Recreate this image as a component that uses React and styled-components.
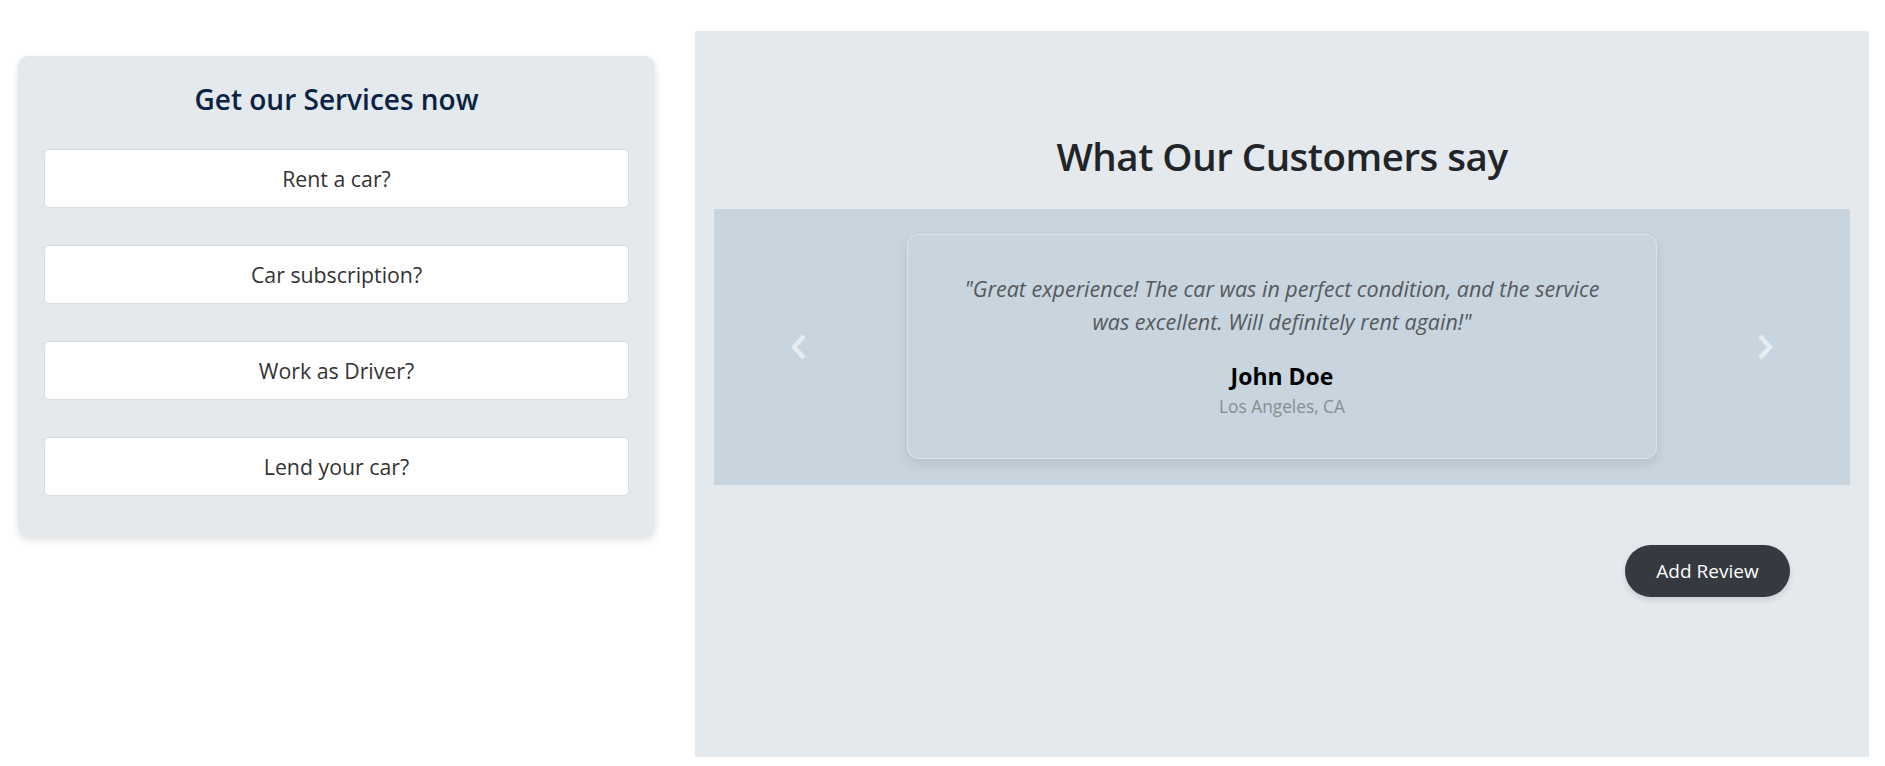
import React from 'react';
import styled, { createGlobalStyle } from 'styled-components';

const GlobalStyle = createGlobalStyle`
  body {
    margin: 0;
    background: #fff;
    font-family: "Open Sans", "Noto Sans", sans-serif;
  }
`;

const Page = styled.div`
  display: flex;
  align-items: flex-start;
  gap: 40px;
  padding: 31px 16px 9px 18px;
`;

const ServicesCard = styled.div`
  width: 637px;
  box-sizing: border-box;
  margin-top: 25px;
  padding: 27px 26px 40px;
  background: #e3e9ed;
  border-radius: 10px;
  box-shadow: 0 4px 8px rgba(0, 0, 0, 0.12);
`;

const ServicesTitle = styled.h2`
  margin: 0 0 32px;
  font-size: 28px;
  line-height: 33.6px;
  font-weight: 600;
  text-align: center;
  color: #0b2342;
`;

const ServiceList = styled.div`
  display: flex;
  flex-direction: column;
  gap: 37px;
`;

const ServiceButton = styled.button`
  height: 59px;
  width: 100%;
  background: #fff;
  border: 1px solid #d6dce0;
  border-radius: 5px;
  font-family: inherit;
  font-size: 21.3px;
  color: #333;
  cursor: pointer;
`;

const ReviewsPanel = styled.section`
  width: 1174px;
  height: 726px;
  box-sizing: border-box;
  padding: 0 19px;
  background: #e3e9ed;
  display: flex;
  flex-direction: column;
`;

const ReviewsHeading = styled.h1`
  margin: 101px 0 29px;
  font-size: 38.5px;
  letter-spacing: -0.5px;
  line-height: 48px;
  font-weight: 600;
  text-align: center;
  color: #212529;
`;

const Carousel = styled.div`
  display: flex;
  align-items: center;
  justify-content: space-between;
  padding: 25px 0 26px;
  background: #c9d5de;
`;

const Control = styled.button`
  width: 170px;
  align-self: stretch;
  display: flex;
  align-items: center;
  justify-content: center;
  background: none;
  border: 0;
  padding: 0;
  cursor: pointer;
`;

const ReviewCard = styled.div`
  width: 750px;
  height: 225px;
  box-sizing: border-box;
  padding: 37px 30px 0;
  border: 1px solid rgba(255, 255, 255, 0.35);
  border-radius: 12px;
  background: #c8d4de;
  box-shadow: 0 5px 12px rgba(0, 0, 0, 0.1);
  text-align: center;
`;

const Quote = styled.p`
  margin: 0 0 25px;
  font-size: 21.5px;
  line-height: 33px;
  font-style: italic;
  color: #55595d;
`;

const Name = styled.div`
  font-size: 23px;
  line-height: 26px;
  font-weight: 700;
  color: #000;
`;

const Location = styled.div`
  margin-top: 5px;
  font-size: 17.3px;
  line-height: 26px;
  color: #8a8d90;
`;

const AddButton = styled.button`
  align-self: flex-end;
  margin: 60px 60px 0 0;
  width: 165px;
  height: 52px;
  border: 0;
  border-radius: 26px;
  background: #343a40;
  color: #fff;
  font-family: inherit;
  font-size: 19px;
  box-shadow: 0 3px 6px rgba(0, 0, 0, 0.12);
  cursor: pointer;
`;

const Chevron = ({ dir }) => (
  <svg width="18" height="26" viewBox="0 0 18 26">
    <path
      d={dir === 'left' ? 'M14 2 L4 13 L14 24' : 'M4 2 L14 13 L4 24'}
      fill="none"
      stroke="#e6ecf0"
      strokeWidth="4.5"
      strokeLinejoin="miter"
    />
  </svg>
);

const services = ['Rent a car?', 'Car subscription?', 'Work as Driver?', 'Lend your car?'];

function App() {
  return (
    <>
      <GlobalStyle />
      <Page>
        <ServicesCard>
          <ServicesTitle>Get our Services now</ServicesTitle>
          <ServiceList>
            {services.map(s => (
              <ServiceButton key={s}>{s}</ServiceButton>
            ))}
          </ServiceList>
        </ServicesCard>

        <ReviewsPanel>
          <ReviewsHeading>What Our Customers say</ReviewsHeading>
          <Carousel>
            <Control aria-label="Previous"><Chevron dir="left" /></Control>
            <ReviewCard>
              <Quote>
                "Great experience! The car was in perfect condition, and the service
                <br />
                was excellent. Will definitely rent again!"
              </Quote>
              <Name>John Doe</Name>
              <Location>Los Angeles, CA</Location>
            </ReviewCard>
            <Control aria-label="Next"><Chevron dir="right" /></Control>
          </Carousel>
          <AddButton>Add Review</AddButton>
        </ReviewsPanel>
      </Page>
    </>
  );
}

export default App;
